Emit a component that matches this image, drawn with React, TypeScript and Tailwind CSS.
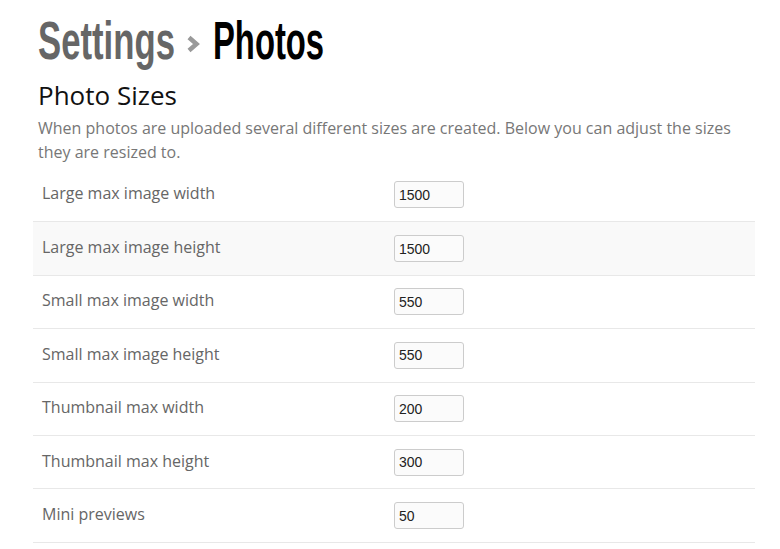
import React from "react";

const rows = [
  { label: "Large max image width", value: "1500" },
  { label: "Large max image height", value: "1500" },
  { label: "Small max image width", value: "550" },
  { label: "Small max image height", value: "550" },
  { label: "Thumbnail max width", value: "200" },
  { label: "Thumbnail max height", value: "300" },
  { label: "Mini previews", value: "50" },
];

export default function App() {
  return (
    <div className="w-[780px] h-[549px] overflow-hidden bg-white" style={{ fontFamily: '"Open Sans", sans-serif' }}>
      <div className="w-[722px] ml-[33px]">
        <h1
          className="pl-[5px] pt-[10px] h-[70px] text-[54px] leading-[60px] font-bold flex items-start"
          style={{ fontFamily: '"Liberation Sans", Arial, sans-serif' }}
        >
          <span className="w-[137px] whitespace-nowrap">
            <span className="inline-block origin-left scale-x-[0.643] text-[#666]">Settings</span>
          </span>
          <svg width="14" height="18" viewBox="0 0 14 18" className="ml-[11px] mt-[25px]">
            <path d="M3 2.5 L10.5 9 L3 15.5" fill="none" stroke="#999" strokeWidth="4.5" strokeLinejoin="miter" />
          </svg>
          <span className="ml-[13px] w-[112px] whitespace-nowrap">
            <span className="inline-block origin-left scale-x-[0.607] text-black">Photos</span>
          </span>
        </h1>
        <h2 className="pl-[5px] mt-[8px] text-[26px] leading-[34px] text-[#111]">Photo Sizes</h2>
        <p className="pl-[5px] mt-[4px] text-[16px] leading-[24px] text-[#777]">
          When photos are uploaded several different sizes are created. Below you can adjust the sizes they are resized to.
        </p>
        <div className="mt-[4px]">
          {rows.map((r, i) => (
            <div
              key={r.label}
              className={`flex items-center h-[53.4px] ${i > 0 ? "border-t border-[#e8e8e8]" : ""} ${i === 1 ? "bg-[#f9f9f9]" : ""}`}
            >
              <div className="w-[361px] pl-[9px] text-[16px] text-[#666] -mt-[3px]">{r.label}</div>
              <input
                readOnly
                value={r.value}
                className="w-[70px] h-[27px] border border-[#ccc] rounded-[3px] bg-[#fbfbfb] px-[4px] text-[14px] text-[#222] outline-none"
                style={{ fontFamily: '"Liberation Sans", Arial, sans-serif' }}
              />
            </div>
          ))}
          <div className="border-t border-[#e8e8e8]" />
        </div>
      </div>
    </div>
  );
}
